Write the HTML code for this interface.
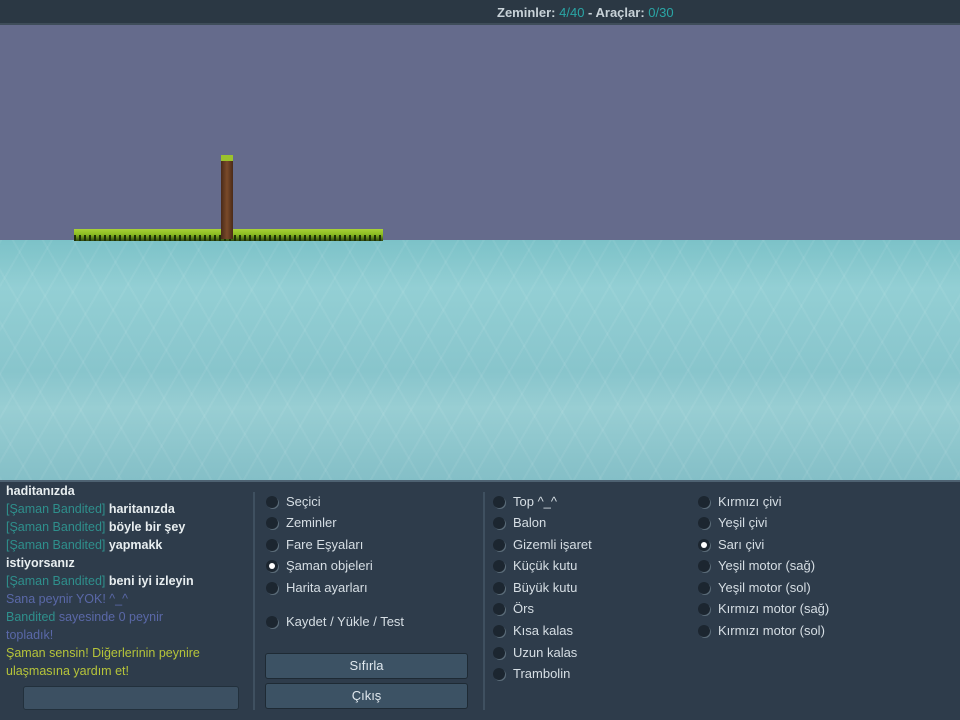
<!DOCTYPE html>
<html><head><meta charset="utf-8"><style>
*{margin:0;padding:0;box-sizing:border-box}
body{width:960px;height:720px;overflow:hidden;background:#2f3d4b;font-family:"Liberation Sans","DejaVu Sans",sans-serif;position:relative}
.top{position:absolute;left:0;top:0;width:960px;height:25px;background:#2b3844;border-bottom:2px solid #3f4d5a;color:#c8d2d8;font-size:13px;font-weight:bold}
.top span.c{color:#2aa6a6;font-weight:normal}
.sky{position:absolute;left:0;top:25px;width:960px;height:216px;background:#656b8c}
.water{position:absolute;left:0;top:240px;width:960px;height:240px;background:linear-gradient(#7cc2c8 0%,#93cfd4 20%,#88c5cc 55%,#98ced3 70%,#84bfc7 100%)}
.water:before{content:"";position:absolute;inset:0;background:repeating-linear-gradient(120deg,rgba(255,255,255,.06) 0 2px,transparent 2px 22px),repeating-linear-gradient(60deg,rgba(255,255,255,.06) 0 2px,transparent 2px 26px)}
.grass{position:absolute;left:74px;top:229px;width:309px;height:12px;background:linear-gradient(#a9d236 0,#8bbd22 45%,#2f4a10 100%)}
.grass:after{content:"";position:absolute;left:0;right:0;bottom:0;height:6px;background:repeating-linear-gradient(90deg,#1e3008 0 2px,transparent 2px 5px)}
.post{position:absolute;left:221px;top:155px;width:12px;height:84px;background:linear-gradient(90deg,#4a2a18,#7a4a2a,#4a2a18);border-top:6px solid #9bc32c}
.panel{position:absolute;left:0;top:480px;width:960px;height:240px;background:#2e3c4b;border-top:2px solid #4e6272}
.chat{position:absolute;left:6px;top:482px;font-size:12.5px;font-weight:bold;line-height:18px;color:#e8eef0}
.t{color:#2e8f8c;font-weight:normal}.p{color:#5a68a8;font-weight:normal}.y{color:#b6c43a;font-weight:normal}
.inp{position:absolute;left:23px;top:686px;width:216px;height:24px;background:#3c5062;border:1px solid #22303c;border-radius:3px}
.sep{position:absolute;top:492px;width:2px;height:218px;background:#3f5060}
.r{position:absolute;font-size:13px;color:#d6dee4;white-space:nowrap}
.r:before{content:"";position:absolute;left:-20px;top:2px;width:12px;height:12px;border-radius:50%;background:#1c2630;box-shadow:1px 1px 0 #5a6b78}
.r.on:after{content:"";position:absolute;left:-17px;top:5px;width:6px;height:6px;border-radius:50%;background:#fff}
.btn{position:absolute;left:265px;width:203px;height:26px;background:#3c5264;border:1px solid #1e2a34;border-radius:3px;color:#e0e8ee;font-size:13px;text-align:center;line-height:24px}
</style></head><body>
<div class="top"><span style="position:absolute;left:497px;top:5px">Zeminler: <span class="c">4/40</span> - Araçlar: <span class="c">0/30</span></span></div>
<div class="sky"></div>
<div class="water"></div>
<div class="grass"></div>
<div class="post"></div>
<div class="panel"></div>
<div class="chat">haditanızda<br><span class="t">[Şaman Bandited]</span> haritanızda<br><span class="t">[Şaman Bandited]</span> böyle bir şey<br><span class="t">[Şaman Bandited]</span> yapmakk<br>istiyorsanız<br><span class="t">[Şaman Bandited]</span> beni iyi izleyin<br><span class="p">Sana peynir YOK! ^_^</span><br><span class="t">Bandited</span> <span class="p">sayesinde 0 peynir</span><br><span class="p">topladık!</span><br><span class="y">Şaman sensin! Diğerlerinin peynire</span><br><span class="y">ulaşmasına yardım et!</span></div>
<div class="inp"></div>
<div class="sep" style="left:253px"></div>
<div class="sep" style="left:483px"></div>
<div class="r" style="left:286px;top:494px">Seçici</div>
<div class="r" style="left:286px;top:515px">Zeminler</div>
<div class="r" style="left:286px;top:537px">Fare Eşyaları</div>
<div class="r on" style="left:286px;top:558px">Şaman objeleri</div>
<div class="r" style="left:286px;top:580px">Harita ayarları</div>
<div class="r" style="left:286px;top:614px">Kaydet / Yükle / Test</div>
<div class="btn" style="top:653px">Sıfırla</div>
<div class="btn" style="top:683px">Çıkış</div>
<div class="r" style="left:513px;top:494px">Top ^_^</div>
<div class="r" style="left:513px;top:515px">Balon</div>
<div class="r" style="left:513px;top:537px">Gizemli işaret</div>
<div class="r" style="left:513px;top:558px">Küçük kutu</div>
<div class="r" style="left:513px;top:580px">Büyük kutu</div>
<div class="r" style="left:513px;top:601px">Örs</div>
<div class="r" style="left:513px;top:623px">Kısa kalas</div>
<div class="r" style="left:513px;top:645px">Uzun kalas</div>
<div class="r" style="left:513px;top:666px">Trambolin</div>
<div class="r" style="left:718px;top:494px">Kırmızı çivi</div>
<div class="r" style="left:718px;top:515px">Yeşil çivi</div>
<div class="r on" style="left:718px;top:537px">Sarı çivi</div>
<div class="r" style="left:718px;top:558px">Yeşil motor (sağ)</div>
<div class="r" style="left:718px;top:580px">Yeşil motor (sol)</div>
<div class="r" style="left:718px;top:601px">Kırmızı motor (sağ)</div>
<div class="r" style="left:718px;top:623px">Kırmızı motor (sol)</div>
</body></html>
